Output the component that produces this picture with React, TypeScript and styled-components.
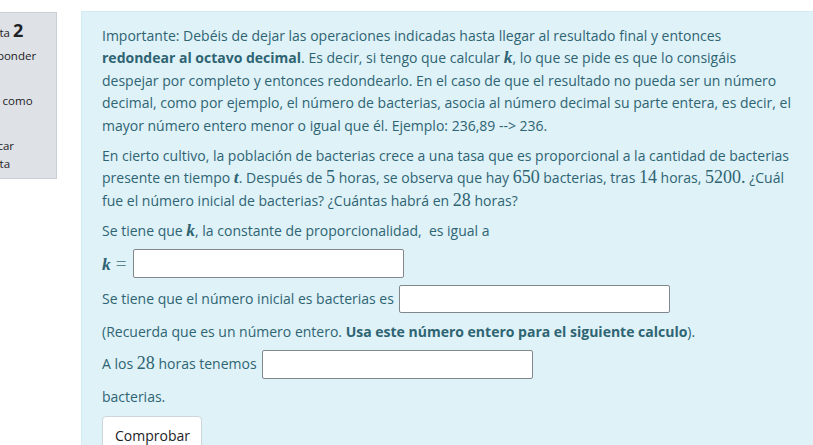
import React from "react";
import styled, { createGlobalStyle } from "styled-components";

const Global = createGlobalStyle`
  html, body { margin: 0; padding: 0; background: #ffffff; overflow: hidden; }
  body { width: 813px; height: 445px; }
`;

const Page = styled.div`
  display: flex;
  align-items: flex-start;
  gap: 24px;
  padding-top: 11px;
  width: 813px;
  height: 434px;
  overflow: hidden;
`;

const Info = styled.div`
  flex: 0 0 auto;
  box-sizing: border-box;
  width: 107px;
  margin-left: -50px;
  margin-top: 1px;
  padding: 5px 8px 5px 10px;
  background: #dee2e6;
  border: 1px solid #cad0d7;
  color: #1d2125;
  font-family: "Open Sans", "Noto Sans", sans-serif;
  font-size: 11.5px;
  line-height: 18px;
`;

const QNo = styled.div`
  white-space: nowrap;
  line-height: 24px;
  margin-bottom: 2px;
  span { font-weight: 700; font-size: 18px; }
`;

const InfoBlock = styled.div`
  white-space: nowrap;
  margin-bottom: 9px;
  &:last-child { margin-bottom: 0; }
`;

const Flag = styled.span`
  display: inline-block;
  width: 13px;
  margin-right: 2px;
`;

const Formulation = styled.div`
  flex: 0 0 auto;
  box-sizing: border-box;
  width: 760px;
  min-height: 460px;
  padding: 12.5px 20px 20px 20px;
  background: #def2f8;
  border: 1px solid #d1edf6;
  border-right: none;
  color: #2f6473;
  font-family: "Open Sans", "Noto Sans", sans-serif;
  font-size: 14px;
  line-height: 22.5px;
`;

const Para = styled.p`
  margin: 0 0 7.5px 0;
  white-space: nowrap;
`;

const InputLine = styled.div`
  display: flex;
  align-items: center;
  gap: 5px;
  height: 28px;
  margin: 0 0 7.5px 0;
  white-space: nowrap;
`;

const Answer = styled.input`
  box-sizing: border-box;
  width: 271px;
  height: 28.5px;
  margin: 0;
  padding: 0 6px;
  background: #ffffff;
  border: 1px solid #82878c;
  border-radius: 2px;
  font: inherit;
  outline: none;
`;

const Mi = styled.span`
  font-family: "Liberation Serif", "DejaVu Serif", serif;
  font-style: italic;
  font-weight: 700;
  font-size: 17.5px;
  line-height: 1;
`;

const Mn = styled.span`
  font-family: "Liberation Serif", "DejaVu Serif", serif;
  font-size: 18px;
  line-height: 1;
`;

const Mo = styled.span`
  font-family: "Liberation Serif", "DejaVu Serif", serif;
  font-size: 19px;
  line-height: 1;
  color: #5a8593;
  margin-left: 5px;
  margin-right: 2px;
`;

const MathBox = styled.span`
  display: inline-flex;
  align-items: baseline;
`;

const Button = styled.button`
  box-sizing: border-box;
  width: 100px;
  height: 36px;
  padding: 2px 12px 0 12px;
  background: #ffffff;
  border: 1px solid #ced4da;
  border-radius: 4px;
  color: #1d2125;
  font-family: "Open Sans", "Noto Sans", sans-serif;
  font-size: 14px;
  text-align: center;
`;

export default function App() {
  return (
    <>
      <Global />
      <Page>
        <Info>
          <QNo>
            Pregunta <span>2</span>
          </QNo>
          <InfoBlock>
            Sin responder
            <br />
            aún
          </InfoBlock>
          <InfoBlock>
            Puntúa como
            <br />
            1,00
          </InfoBlock>
          <InfoBlock>
            <Flag />
            Marcar
            <br />
            pregunta
          </InfoBlock>
        </Info>
        <Formulation>
          <Para>
            Importante: Debéis de dejar las operaciones indicadas hasta llegar al resultado final y entonces
            <br />
            <strong>redondear al octavo decimal</strong>. Es decir, si tengo que calcular <Mi>k</Mi>, lo que se pide es que lo consigáis
            <br />
            despejar por completo y entonces redondearlo. En el caso de que el resultado no pueda ser un número
            <br />
            decimal, como por ejemplo, el número de bacterias, asocia al número decimal su parte entera, es decir, el
            <br />
            mayor número entero menor o igual que él. Ejemplo: 236,89 --&gt; 236.
          </Para>
          <Para>
            En cierto cultivo, la población de bacterias crece a una tasa que es proporcional a la cantidad de bacterias
            <br />
            presente en tiempo <Mi>t</Mi>. Después de <Mn>5</Mn> horas, se observa que hay <Mn>650</Mn> bacterias, tras{" "}
            <Mn>14</Mn> horas, <Mn>5200.</Mn> ¿Cuál
            <br />
            fue el número inicial de bacterias? ¿Cuántas habrá en <Mn>28</Mn> horas?
          </Para>
          <Para>
            Se tiene que <Mi>k</Mi>, la constante de proporcionalidad,{"\u00a0 "}es igual a
          </Para>
          <InputLine>
            <MathBox>
              <Mi>k</Mi>
              <Mo>=</Mo>
            </MathBox>
            <Answer type="text" aria-label="k" />
          </InputLine>
          <InputLine>
            <span>Se tiene que el número inicial es bacterias es</span>
            <Answer type="text" aria-label="número inicial" />
          </InputLine>
          <Para>
            (Recuerda que es un número entero. <strong>Usa este número entero para el siguiente calculo</strong>).
          </Para>
          <InputLine>
            <span>
              A los <Mn>28</Mn> horas tenemos
            </span>
            <Answer type="text" aria-label="bacterias a las 28 horas" />
          </InputLine>
          <Para>bacterias.</Para>
          <Button type="button">Comprobar</Button>
        </Formulation>
      </Page>
    </>
  );
}
